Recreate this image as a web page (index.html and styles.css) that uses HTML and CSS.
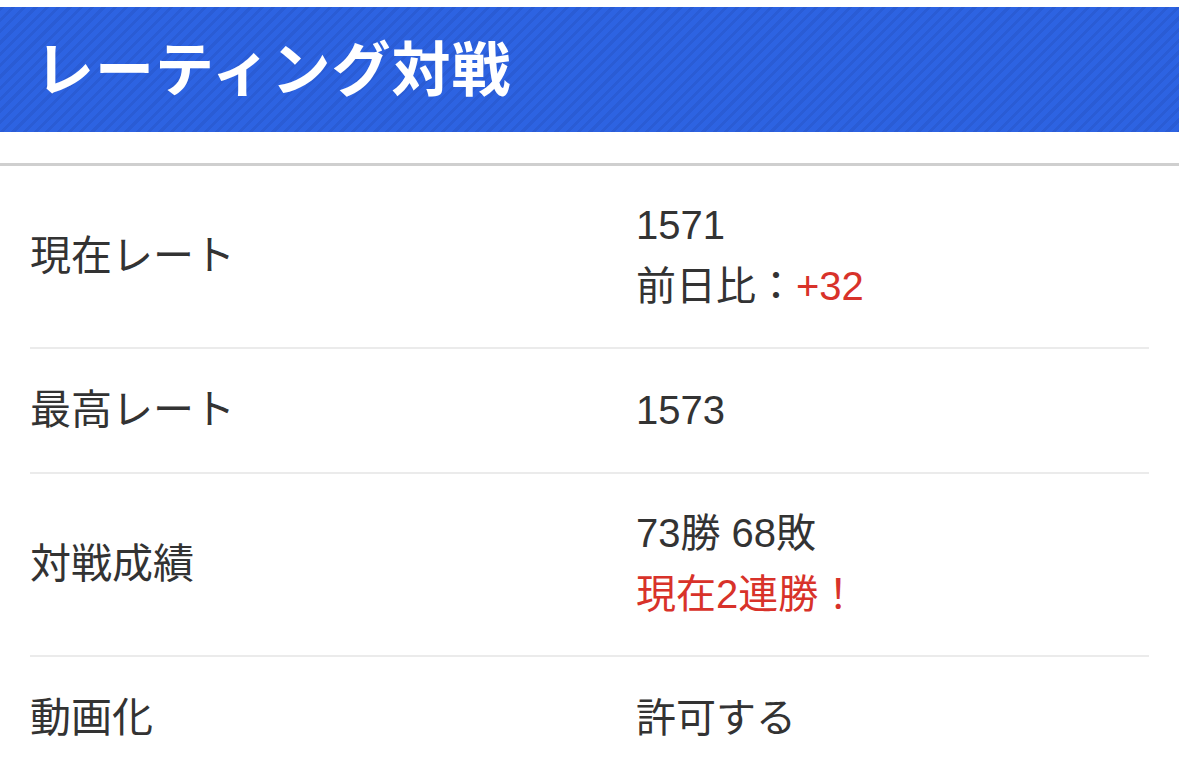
FILE: index.html
```html
<!DOCTYPE html>
<html lang="ja">
<head>
<meta charset="utf-8">
<link rel="stylesheet" href="styles.css">
</head>
<body>
<header class="title-bar"><h1 class="title">レーティング対戦</h1></header>
<div class="sep"></div>
<div class="list">
  <div class="row">
    <div class="label">現在レート</div>
    <div class="value"><div>1571</div><div>前日比：<span class="red">+32</span></div></div>
  </div>
  <div class="row">
    <div class="label">最高レート</div>
    <div class="value"><div>1573</div></div>
  </div>
  <div class="row">
    <div class="label">対戦成績</div>
    <div class="value"><div>73勝 68敗</div><div class="red">現在2連勝！</div></div>
  </div>
  <div class="row last">
    <div class="label">動画化</div>
    <div class="value"><div>許可する</div></div>
  </div>
</div>
</body>
</html>
```
FILE: styles.css
```css
html, body { margin: 0; padding: 0; background: #fff; }
body {
  font-family: "Liberation Sans", "Noto Sans CJK JP", sans-serif;
  color: #333;
  overflow: hidden;
}
.title-bar {
  margin-top: 7px;
  height: 125px;
  background-color: #2d63e2;
  background-image: repeating-linear-gradient(135deg, rgba(0,0,40,0.07) 0 3px, rgba(0,0,0,0) 3px 8px);
  display: flex;
  align-items: center;
  padding-left: 35px;
  padding-bottom: 8px;
  box-sizing: border-box;
}
.title {
  margin: 0;
  color: #fff;
  font-size: 59px;
  font-weight: bold;
  letter-spacing: 1px;
  line-height: 1;
  font-family: "Noto Sans CJK JP", sans-serif;
}
.sep {
  margin-top: 31px;
  height: 3px;
  background: #cfcfcf;
}
.list { padding: 0 30px; }
.row {
  display: flex;
  align-items: center;
  padding: 29px 0 30px;
  border-bottom: 2px solid #ebebeb;
  font-size: 41px;
  line-height: 61px;
}
.row.last { border-bottom: none; }
.label { width: 606px; flex: none; line-height: 64px; }
.value { flex: 1; font-size: 40px; }
.red { color: #d8322a; }
```
